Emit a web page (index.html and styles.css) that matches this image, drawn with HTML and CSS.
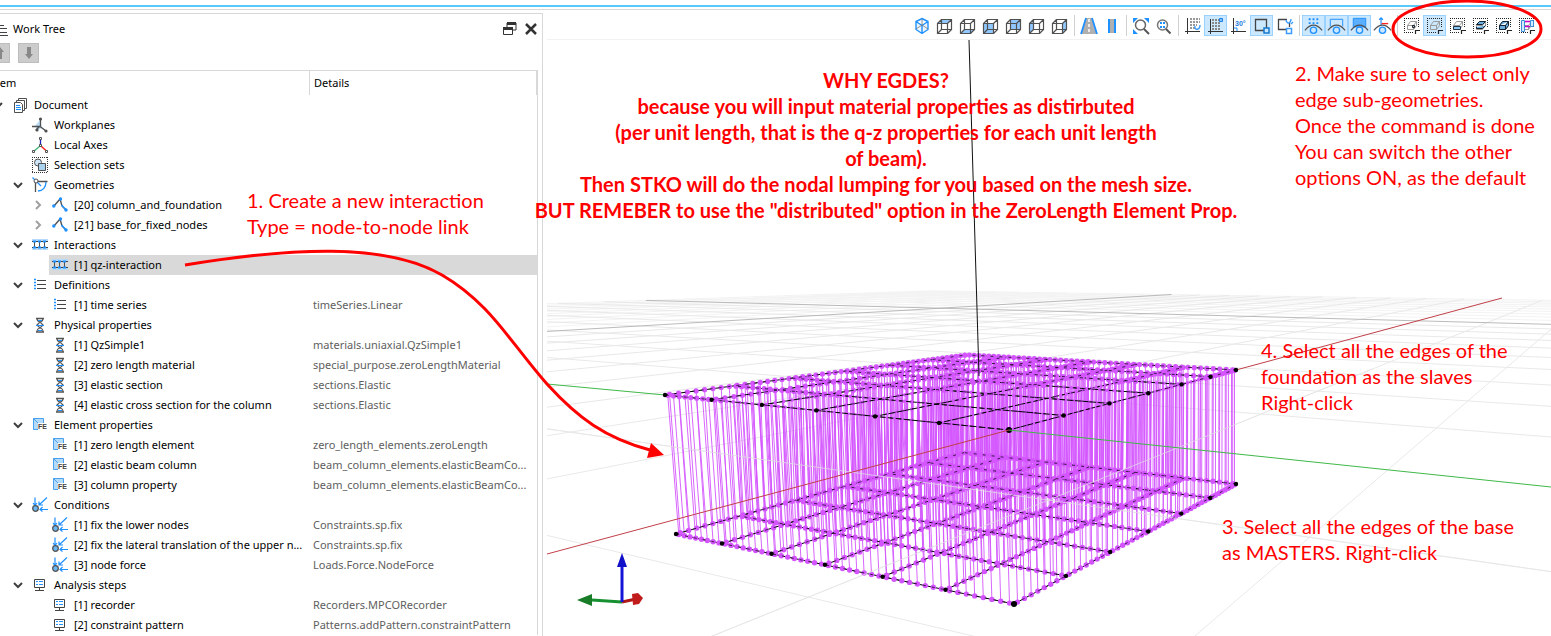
FILE: index.html
```html
<!DOCTYPE html>
<html lang="en">
<head>
<meta charset="utf-8">
<title>Work Tree</title>
<link rel="stylesheet" href="styles.css">
</head>
<body>
<svg class="defs" aria-hidden="true">
  <symbol id="doc" viewBox="0 0 16 16"><path d="M6.500 3.500v-2h8v10h-2M4.500 5.500v-2h8v10h-2" fill="none" stroke="#505050"/><path d="M2.500 5.500h6l2 2v8h-8z" fill="#fff" stroke="#505050"/><path d="M4 8.500h4M4 10.500h5M4 12.500h5" stroke="#1e90ff"/></symbol>
  <symbol id="planes" viewBox="0 0 16 16"><path d="M8 3L3 9l2 4 5-2z" fill="#b9dcf7"/><path d="M8.500 1v8M0 9.500h8l6 4.500M8 9l-4 4" fill="none" stroke="#505050" stroke-width="1.300"/><circle cx="8.500" cy="2" r="1.600" fill="#505050"/><circle cx="14" cy="14" r="1.600" fill="#505050"/><circle cx="5" cy="13" r="1.600" fill="#505050"/></symbol>
  <symbol id="axes" viewBox="0 0 16 16"><path d="M8.500 2v7" stroke="#2020c0" stroke-width="1.300"/><path d="M8 9l-6.500 5.500" stroke="#3cb371" stroke-width="1.300"/><path d="M9 9l5.500 5" stroke="#f22" stroke-width="1.500"/><path d="M7.500.5h2v2h-2zM7.500 7.500h2v2h-2zM.5 13.500h2v2h-2zM13.500 13.500h2v2h-2z" fill="#fff" stroke="#505050"/></symbol>
  <symbol id="sets" viewBox="0 0 16 16"><path d="M.5 0v16M15.500 0v16M0 .5h16M0 15.500h16" fill="none" stroke="#333" stroke-dasharray="1 1"/><circle cx="6" cy="5.500" r="3.500" fill="#cfe6f8" stroke="#505050"/><path d="M6.500 6.500h7v7h-7z" fill="#a9d2ee" stroke="#505050"/></symbol>
  <symbol id="geo" viewBox="0 0 16 16"><path d="M4 4.500h11.500M3.500 4v11" stroke="#505050" stroke-width="1.300"/><path d="M.5.5L9 9M14 5c0 5-3 9-8 9" fill="none" stroke="#1e90ff" stroke-width="1.300"/><circle cx="4" cy="4" r="2" fill="#fff" stroke="#505050"/></symbol>
  <symbol id="poly" viewBox="0 0 16 16"><path d="M2 9l6-7 2 7 4 4" fill="none" stroke="#555" stroke-width="1.400"/><circle cx="1.800" cy="9" r="1.700" fill="#1e90ff"/><circle cx="8.500" cy="2" r="1.700" fill="#1e90ff"/><path d="M9.500 8l4.500 5" stroke="#1e90ff" stroke-width="1.400"/><circle cx="14" cy="13" r="1.700" fill="#1e90ff"/></symbol>
  <symbol id="link" viewBox="0 0 16 16"><path d="M0 2h16v3H0zM0 10h16v3H0z" fill="#b4d9fa"/><path d="M0 4.500h16M0 10.500h16" stroke="#444"/><path d="M2.500 5v5M7.500 5v5M12.500 5v5" stroke="#505050"/><path d="M1 3.500h3v2H1zM6 3.500h3v2H6zM11 3.500h3v2h-3zM1 9.500h3v2H1zM6 9.500h3v2H6zM11 9.500h3v2h-3z" fill="#1e90ff"/></symbol>
  <symbol id="list" viewBox="0 0 16 16"><path d="M5 3.500h9M5 7.500h9M5 11.500h9" stroke="#444"/><path d="M2 2.500h2M2 5.500h2M2 8.500h2M2 11.500h2" stroke="#1e90ff" stroke-width="1.500"/></symbol>
  <symbol id="phys" viewBox="0 0 16 16"><path d="M4 1.500h8M4 15h8" stroke="#555" stroke-width="1.400"/><path d="M5 1.500q0 3 3 3.500 3 -.5 3-3.500M8 5L5 8l3 3 3-3zM5 15q0-3.500 3-4 3 .5 3 4" fill="none" stroke="#555" stroke-width="1.200"/><path d="M4 8.500h8M6 3.500h4M6 13.500h4" stroke="#1e90ff"/></symbol>
  <symbol id="fe" viewBox="0 0 16 16"><path d="M1.500 1.500h10v11h-10z" fill="#b4dcfa" stroke="#48a0ee"/><path d="M1.500 1.500l5 5" stroke="#48a0ee"/><path d="M6 6h10v8H6z" fill="#fff"/><text x="6" y="12" class="mini">FE</text></symbol>
  <symbol id="cond" viewBox="0 0 16 16"><path d="M3 .5v8M1 6l2 2.500L5 6M15 .5L7 8M7 4.500V8h4M16 12.500H8M10.500 10L8 12.500l2.500 2" fill="none" stroke="#1e90ff" stroke-width="1.200"/><circle cx="3.500" cy="11.500" r="2.800" fill="#69b7f5" stroke="#555" stroke-width="1.300"/></symbol>
  <symbol id="step" viewBox="0 0 16 16"><path d="M2.500 2.500h10v8h-10z" fill="#fff" stroke="#444"/><path d="M7.500 11v2M3 13.500h9" stroke="#444"/><path d="M4 4.500h2M7 4.500h4M4 7.500h2M7 7.500h4" stroke="#1e90ff"/></symbol>
  <symbol id="cube" viewBox="0 0 18 18"><path d="M1.500 6.500h10v10h-10zM5.500 2.500h10v10h-10zM1.500 6.500l4-4M11.500 6.500l4-4M1.500 16.500l4-4M11.500 16.500l4-4" fill="none" stroke="#505050" stroke-width="1.200"/></symbol>
  <symbol id="bend" viewBox="0 0 22 22"><path d="M2 16Q11 5 20 16" fill="none" stroke="#505050" stroke-width="1.300"/><circle cx="11" cy="16" r="3.300" fill="#cce8ff" stroke="#1e90ff" stroke-width="1.400"/></symbol>
  <symbol id="pick" viewBox="0 0 18 18"><path d="M1.500 1v15M15.500 1v10M1 1.500h15M1 15.500h10" fill="none" stroke="#222" stroke-dasharray="1 1"/><path d="M4.500 12.500v-4l3-4h6v4l-3 4zM4.500 8.500h6l3-4M10.500 8.500v4" fill="none" stroke="#999"/><path d="M12.500 17v-3.500H17" fill="none" stroke="#222" stroke-width="1.200"/></symbol>
  <symbol id="open" viewBox="0 0 10 10"><path d="M1 3l4 4 4-4" fill="none" stroke="#404040" stroke-width="2"/></symbol>
  <symbol id="shut" viewBox="0 0 10 10"><path d="M3 1l4 4-4 4" fill="none" stroke="#a0a0a0" stroke-width="2"/></symbol>
</svg>

<div class="strip"></div>
<main class="window">
  <aside class="dock">
    <header class="dock-title">
      <svg class="title-icon" viewBox="0 0 12 14"><path d="M2 2.500h6M4 5.500h7M4 9.500h7M4 12.500h8" stroke="#444"/></svg>
      <h1>Work Tree</h1>
      <button class="plain" aria-label="Float"><svg width="16" height="16"><path d="M5 2h9v7H5z" fill="none" stroke="#333"/><path d="M5 2.500h9" stroke="#333" stroke-width="3"/><path d="M1.500 7.500h9v6h-9z" fill="#fff" stroke="#333"/><path d="M1 7.500h10" stroke="#333" stroke-width="3"/></svg></button>
      <button class="plain" aria-label="Close"><svg width="16" height="16"><path d="M3 3l10 10M13 3L3 13" stroke="#333" stroke-width="2.500"/></svg></button>
    </header>
    <div class="moves">
      <button aria-label="Move up"><svg width="10" height="14"><path d="M5 1L1 6h2v7h4V6h2z" fill="#888"/></svg></button>
      <button aria-label="Move down"><svg width="10" height="14"><path d="M5 13L1 8h2V1h4v7h2z" fill="#888"/></svg></button>
    </div>
    <table class="tree">
      <thead><tr><th class="cut">Item</th><th>Details</th></tr></thead>
      <tbody>
        <tr><td><div class="node"><svg><use href="#open"/></svg><svg><use href="#doc"/></svg><span>Document</span></div></td><td></td></tr>
        <tr><td><div class="node l1"><i></i><svg><use href="#planes"/></svg><span>Workplanes</span></div></td><td></td></tr>
        <tr><td><div class="node l1"><i></i><svg><use href="#axes"/></svg><span>Local Axes</span></div></td><td></td></tr>
        <tr><td><div class="node l1"><i></i><svg><use href="#sets"/></svg><span>Selection sets</span></div></td><td></td></tr>
        <tr><td><div class="node l1"><svg><use href="#open"/></svg><svg><use href="#geo"/></svg><span>Geometries</span></div></td><td></td></tr>
        <tr><td><div class="node l2"><svg><use href="#shut"/></svg><svg><use href="#poly"/></svg><span>[20] column_and_foundation</span></div></td><td></td></tr>
        <tr><td><div class="node l2"><svg><use href="#shut"/></svg><svg><use href="#poly"/></svg><span>[21] base_for_fixed_nodes</span></div></td><td></td></tr>
        <tr><td><div class="node l1"><svg><use href="#open"/></svg><svg><use href="#link"/></svg><span>Interactions</span></div></td><td></td></tr>
        <tr class="selected"><td><div class="node l2"><i></i><svg><use href="#link"/></svg><span>[1] qz-interaction</span></div></td><td></td></tr>
        <tr><td><div class="node l1"><svg><use href="#open"/></svg><svg><use href="#list"/></svg><span>Definitions</span></div></td><td></td></tr>
        <tr><td><div class="node l2"><i></i><svg><use href="#list"/></svg><span>[1] time series</span></div></td><td>timeSeries.Linear</td></tr>
        <tr><td><div class="node l1"><svg><use href="#open"/></svg><svg><use href="#phys"/></svg><span>Physical properties</span></div></td><td></td></tr>
        <tr><td><div class="node l2"><i></i><svg><use href="#phys"/></svg><span>[1] QzSimple1</span></div></td><td>materials.uniaxial.QzSimple1</td></tr>
        <tr><td><div class="node l2"><i></i><svg><use href="#phys"/></svg><span>[2] zero length material</span></div></td><td>special_purpose.zeroLengthMaterial</td></tr>
        <tr><td><div class="node l2"><i></i><svg><use href="#phys"/></svg><span>[3] elastic section</span></div></td><td>sections.Elastic</td></tr>
        <tr><td><div class="node l2"><i></i><svg><use href="#phys"/></svg><span>[4] elastic cross section for the column</span></div></td><td>sections.Elastic</td></tr>
        <tr><td><div class="node l1"><svg><use href="#open"/></svg><svg><use href="#fe"/></svg><span>Element properties</span></div></td><td></td></tr>
        <tr><td><div class="node l2"><i></i><svg><use href="#fe"/></svg><span>[1] zero length element</span></div></td><td>zero_length_elements.zeroLength</td></tr>
        <tr><td><div class="node l2"><i></i><svg><use href="#fe"/></svg><span>[2] elastic beam column</span></div></td><td>beam_column_elements.elasticBeamCo...</td></tr>
        <tr><td><div class="node l2"><i></i><svg><use href="#fe"/></svg><span>[3] column property</span></div></td><td>beam_column_elements.elasticBeamCo...</td></tr>
        <tr><td><div class="node l1"><svg><use href="#open"/></svg><svg><use href="#cond"/></svg><span>Conditions</span></div></td><td></td></tr>
        <tr><td><div class="node l2"><i></i><svg><use href="#cond"/></svg><span>[1] fix the lower nodes</span></div></td><td>Constraints.sp.fix</td></tr>
        <tr><td><div class="node l2"><i></i><svg><use href="#cond"/></svg><span>[2] fix the lateral translation of the upper n...</span></div></td><td>Constraints.sp.fix</td></tr>
        <tr><td><div class="node l2"><i></i><svg><use href="#cond"/></svg><span>[3] node force</span></div></td><td>Loads.Force.NodeForce</td></tr>
        <tr><td><div class="node l1"><svg><use href="#open"/></svg><svg><use href="#step"/></svg><span>Analysis steps</span></div></td><td></td></tr>
        <tr><td><div class="node l2"><i></i><svg><use href="#step"/></svg><span>[1] recorder</span></div></td><td>Recorders.MPCORecorder</td></tr>
        <tr><td><div class="node l2"><i></i><svg><use href="#step"/></svg><span>[2] constraint pattern</span></div></td><td>Patterns.addPattern.constraintPattern</td></tr>
      </tbody>
    </table>
  </aside>

  <section class="view">
    <nav class="toolbar" aria-label="View tools">
      <button aria-label="Isometric"><svg viewBox="0 0 18 18"><path d="M9 1.500l6 3v8l-6 4-6-4v-8zM3 4.500l6 4 6-4M9 8.500v8" fill="#eaf5ff" stroke="#1e90ff" stroke-width="1.400"/><path d="M9 2v6l-6 4M9 8l6 4" fill="none" stroke="#777" stroke-width=".8"/></svg></button>
      <button aria-label="Top"><svg viewBox="0 0 18 18"><path d="M1.500 6.500l4-4h10l-4 4z" fill="#90c8ff"/><use href="#cube"/></svg></button>
      <button aria-label="Bottom"><svg viewBox="0 0 18 18"><path d="M1.500 16.500l4-4h10l-4 4z" fill="#90c8ff"/><use href="#cube"/></svg></button>
      <button aria-label="Front"><svg viewBox="0 0 18 18"><path d="M1.500 6.500h10v10h-10z" fill="#90c8ff"/><use href="#cube"/></svg></button>
      <button aria-label="Back"><svg viewBox="0 0 18 18"><path d="M5.500 2.500h10v10h-10z" fill="#90c8ff"/><use href="#cube"/></svg></button>
      <button aria-label="Left"><svg viewBox="0 0 18 18"><path d="M1.500 6.500l4-4v10l-4 4z" fill="#90c8ff"/><use href="#cube"/></svg></button>
      <button aria-label="Right"><svg viewBox="0 0 18 18"><path d="M11.500 6.500l4-4v10l-4 4z" fill="#90c8ff"/><use href="#cube"/></svg></button>
      <hr>
      <button aria-label="Perspective"><svg viewBox="0 0 18 18"><path d="M6 1h6l5 16H1z" fill="#b0b0b0"/><path d="M6 1L1 17M12 1l5 16" stroke="#1e90ff" stroke-width="1.800"/><path d="M9 2v14" stroke="#fff" stroke-width="1.500" stroke-dasharray="3 2"/></svg></button>
      <button aria-label="Orthographic"><svg viewBox="0 0 18 18"><path d="M5 2h8v14H5z" fill="#b0b0b0"/><path d="M6 2v14M12 2v14" stroke="#1e90ff" stroke-width="2"/></svg></button>
      <hr>
      <button aria-label="Zoom to fit"><svg viewBox="0 0 18 18"><path d="M1 1h5L1 6zM17 1v5l-5-5zM1 17v-5l5 5z" fill="#1e90ff"/><circle cx="8.500" cy="8" r="5" fill="#fff" stroke="#666" stroke-width="1.500"/><path d="M12 12l5 5" stroke="#555" stroke-width="2"/></svg></button>
      <button aria-label="Zoom to selection"><svg viewBox="0 0 18 18"><circle cx="7.500" cy="8" r="5" fill="#fff" stroke="#777" stroke-width="1.500"/><path d="M5 5h2v2H5zM8 5h2v2H8zM5 9h2v2H5zM8 9h2v2H8z" fill="#1e90ff"/><path d="M11 12l4.500 4.500" stroke="#555" stroke-width="2"/></svg></button>
      <hr>
      <button aria-label="Grid"><svg viewBox="0 0 18 18"><path d="M3.500 1v16M1 14.500h15" stroke="#333"/><path d="M6 2h10M6 5h10M6 8h7M6 11h6" stroke="#999" stroke-width="2" stroke-dasharray="2 1"/><path d="M11 9c-1 5 5 4 5-1" fill="none" stroke="#3a9dff" stroke-width="1.400"/></svg></button>
      <button class="on" aria-label="Snap to grid"><svg viewBox="0 0 18 18"><path d="M3.500 2v15M1 14.500h15" stroke="#333"/><path d="M5 3h9M5 6h9M5 9h9M5 12h9" stroke="#888" stroke-width="2" stroke-dasharray="2 1"/><path d="M12.500 1.500h3v3h-3z" fill="#7cc0ff" stroke="#1e80e0"/></svg></button>
      <button aria-label="Snap angle"><svg viewBox="0 0 18 18"><path d="M3.500 1v16M1 14.500h15" stroke="#333"/><path d="M4 11h3v3" fill="none" stroke="#1e90ff"/><text x="5" y="9" class="angle">30°</text></svg></button>
      <button class="on" aria-label="Box select"><svg viewBox="0 0 18 18"><path d="M2.500 2.500h11v11h-11z" fill="none" stroke="#444" stroke-width="1.300"/><path d="M11 11h5v5h-5z" fill="#cce8ff" stroke="#1478d0" stroke-width="1.500"/></svg></button>
      <button aria-label="Lasso select"><svg viewBox="0 0 18 18"><path d="M11 2.500H2.500v10H10M13.500 6v4" fill="none" stroke="#444" stroke-width="1.300"/><path d="M10.500 11.500h5v5h-5z" fill="#fff" stroke="#3a9dff" stroke-width="1.500"/><path d="M10 3c1 5 5 3 5-1M15 7l2-2" fill="none" stroke="#3a9dff" stroke-width="1.300"/></svg></button>
      <hr>
      <button class="on" aria-label="Show vertices"><svg viewBox="0 0 22 22"><path d="M6 4.500h10M6 8.500h10" stroke="#1e90ff" stroke-width="2" stroke-dasharray="2 2"/><use href="#bend"/></svg></button>
      <button class="on" aria-label="Show edges"><svg viewBox="0 0 22 22"><path d="M4.500 12V4.500h13V12" fill="none" stroke="#1e90ff"/><use href="#bend"/></svg></button>
      <button class="on" aria-label="Show faces"><svg viewBox="0 0 22 22"><path d="M4.500 12.500v-9h13v9z" fill="#5cafff" stroke="#1e90ff"/><use href="#bend"/></svg></button>
      <button aria-label="Show axes"><svg viewBox="0 0 22 22"><path d="M9.500 3v8M7.500 5l2-2 2 2" fill="none" stroke="#1e90ff" stroke-width="1.200"/><path d="M10 9h7" stroke="#f22" stroke-width="1.400"/><use href="#bend"/></svg></button>
      <hr>
      <button aria-label="Pick vertices"><svg viewBox="0 0 18 18"><use href="#pick"/><path d="M9.500 8.500h2v2h-2z" fill="#9cf" stroke="#222"/></svg></button>
      <button class="on" aria-label="Pick edges"><svg viewBox="0 0 18 18"><use href="#pick"/></svg></button>
      <button aria-label="Pick wires"><svg viewBox="0 0 18 18"><use href="#pick"/><path d="M4.500 9.500h7v3h-7z" fill="#8cc8f5" stroke="#234"/></svg></button>
      <button aria-label="Pick faces"><svg viewBox="0 0 18 18"><use href="#pick"/><path d="M4.500 7.500l3-3h6l-3 3zM4.500 10v1.500h6l3-3" fill="#6db0e0" stroke="#123"/></svg></button>
      <button aria-label="Pick solids"><svg viewBox="0 0 18 18"><use href="#pick"/><path d="M4.500 12.500v-4l3-4h6v4l-3 4zM4.500 8.500h6l3-4M10.500 8.500v4" fill="#6db0e0" stroke="#123"/></svg></button>
      <button aria-label="Pick interactions"><svg viewBox="0 0 18 18"><use href="#pick"/><path d="M3.500 3.500h3v11h-3zM12.500 3.500h3v6h-3z" fill="#d5ebff" stroke="#3a8fd8"/><path d="M7 4.500h5M7 9.500h5" stroke="#c0c" stroke-width="1.500"/></svg></button>
    </nav>
    <svg class="scene" id="scene" role="img" aria-label="Foundation and base edges linked node to node"></svg>
  </section>

  <svg class="marks" aria-hidden="true">
    <path d="M185 265C290 248 385 242 442 275C490 303 510 342 547 384C578 418 605 438 650 450"/>
    <path class="tip" d="M664 455l-17 3 4-15z"/>
    <ellipse cx="1467" cy="29" rx="74" ry="28"/>
  </svg>
  <p class="note create">1. Create a new interaction<br>Type = node-to-node link</p>
  <p class="note only">2. Make sure to select only<br>edge sub-geometries.<br>Once the command is done<br>You can switch the other<br>options ON, as the default</p>
  <p class="note base">3. Select all the edges of the base<br>as MASTERS. Right-click</p>
  <p class="note slaves">4. Select all the edges of the<br>foundation as the slaves<br>Right-click</p>
  <p class="note why">WHY EGDES?<br>because you will input material properties as distirbuted<br>(per unit length, that is the q-z properties for each unit length<br>of beam).<br>Then STKO will do the nodal lumping for you based on the mesh size.<br>BUT REMEBER to use the "distributed" option in the ZeroLength Element Prop.</p>
</main>
<script src="scene.js"></script>
</body>
</html>
```
FILE: styles.css
```css
* { box-sizing: border-box; }
body {
  margin: 0;
  height: 100vh;
  overflow: hidden;
  position: relative;
  display: flex;
  flex-direction: column;
  background: #fff;
  color: #000;
  font: 11px/20px "Noto Sans", "Open Sans", sans-serif;
}
.defs { position: absolute; width: 0; height: 0; }
.strip {
  flex: none;
  height: 10px;
  border-top: 5px solid #fff;
  border-bottom: 1px solid #d8d8d8;
  background: linear-gradient(#5bc8fa 2px, #fff 2px);
}
.window { flex: 1; display: flex; min-height: 0; }
.dock {
  width: 35%;
  flex: none;
  margin-top: 3px;
  border: solid #d8d8d8;
  border-width: 1px 1px 0 0;
  overflow: hidden;
}
.dock-title { display: flex; align-items: center; height: 29px; }
.title-icon { width: 12px; height: 14px; margin: 2px 5px 0 -4px; }
h1 { flex: 1; margin: 0; font-size: 11px; font-weight: 400; }
button { display: flex; align-items: center; justify-content: center; padding: 0; margin: 0; }
.plain { width: 21px; height: 20px; border: 0; background: none; }
.moves { display: flex; gap: 8px; margin-left: -11px; height: 27px; }
.moves button { width: 21px; height: 20px; border: 1px solid #bdbdbd; background: #ccc; }
.tree {
  width: calc(100% - 4px);
  table-layout: fixed;
  border-collapse: separate;
  border-spacing: 0;
  border: solid #d8d8d8;
  border-width: 1px 1px 0 0;
}
th { height: 24px; padding: 0 4px; text-align: left; font-weight: 400; border-right: 1px solid #d8d8d8; }
th:first-child { width: 310px; }
.cut { text-indent: -12px; }
td { height: 20px; padding: 0 0 0 3px; color: #606060; white-space: nowrap; }
td:first-child { padding: 0; color: #000; }
.node { display: flex; align-items: center; height: 20px; margin-left: -12px; }
.node.l1 { margin-left: 8px; }
.node.l2 { margin-left: 28px; }
.node > :first-child { width: 10px; height: 10px; margin: 0 5px; flex: none; }
.node > :nth-child(2) { width: 16px; height: 16px; margin: 0 6px 0 4px; flex: none; }
.selected td { background: #d9d9d9; }
.selected td:first-child { background: linear-gradient(90deg, #fff 49px, #d9d9d9 49px); }
.mini { font: bold 7px "Liberation Sans", sans-serif; fill: #444; }
.angle { font: bold 7px "Liberation Sans", sans-serif; fill: #1e80e0; }

.view { flex: 1; min-width: 0; padding-left: 4px; display: flex; flex-direction: column; }
.toolbar {
  flex: none;
  height: 30px;
  padding: 5px 13px 3px 0;
  display: flex;
  justify-content: flex-end;
  border-bottom: 1px solid #f2f2f2;
}
.toolbar button { width: 23px; height: 21px; border: 1px solid transparent; background: none; }
.toolbar .on { background: #cce8ff; border-color: #99d1ff; }
.toolbar svg { width: 18px; height: 18px; margin: 1px 0 0 1px; flex: none; }
.toolbar svg[viewBox="0 0 22 22"] { width: 21px; height: 21px; margin: 0; }
.toolbar hr { width: 1px; height: 21px; margin: 0 2px 0 3px; border: 0; background: #d0d0d0; }
.scene { flex: 1; width: 100%; min-height: 0; display: block; }
.grid { stroke: #e9e9e9; fill: none; }
.grid-far { stroke: #f3f3f3; fill: none; }
.grid-major { stroke: #aaa; fill: none; }
.axis-x { stroke: #c04048; }
.axis-y { stroke: #40b848; }
.axis-z { stroke: #111; }
.tie { stroke: #d455ff; stroke-opacity: .9; fill: none; }
.edge { stroke: #000; fill: none; }
.dot { fill: #d455ff; }
.over { stroke: #e6e6e6; stroke-opacity: .7; }

.marks { position: absolute; inset: 0; width: 100%; height: 100%; pointer-events: none; fill: none; stroke: #f00; stroke-width: 3; }
.marks .tip { fill: #f00; stroke: none; }
.note { position: absolute; margin: 0; color: #f00; font: 20px/26px Lato, "Open Sans", sans-serif; white-space: nowrap; }
.create { left: 247px; top: 187px; }
.only { left: 1295px; top: 60px; }
.base { left: 1222px; top: 513px; }
.slaves { left: 1261px; top: 337px; }
.why { left: 886px; top: 67px; transform: translateX(-50%); text-align: center; font-weight: 700; }
```
FILE: scene.js
```js
const scene = document.getElementById('scene');
const OX = 547, OY = 40;

// Projective map of the unit square: near, left, far, right corners.
function plane(n, l, f, r) {
  const sx = n[0] - l[0] + f[0] - r[0], sy = n[1] - l[1] + f[1] - r[1];
  const ax = l[0] - f[0], ay = l[1] - f[1], bx = r[0] - f[0], by = r[1] - f[1];
  const d = ax * by - bx * ay;
  const g = (sx * by - bx * sy) / d, h = (ax * sy - sx * ay) / d;
  const a = l[0] - n[0] + g * l[0], b = r[0] - n[0] + h * r[0];
  const c = l[1] - n[1] + g * l[1], e = r[1] - n[1] + h * r[1];
  const p = (u, v) => {
    const w = g * u + h * v + 1;
    return [(a * u + b * v + n[0]) / w - OX, (c * u + e * v + n[1]) / w - OY];
  };
  p.depth = (u, v) => g * u + h * v + 1;
  return p;
}

const top_ = plane([1009, 430], [665, 395], [967, 354.9], [1236, 370]);
const base = plane([1014, 604], [676, 534], [964, 452.6], [1236, 484]);
const fmt = p => p[0].toFixed(1) + ' ' + p[1].toFixed(1);
const path = (cls, d, extra = '') => `<path class="${cls}" d="${d}" ${extra}/>`;

// A ground line cut where it would pass behind the viewer.
function ground(u0, v0, u1, v1) {
  const d0 = top_.depth(u0, v0), d1 = top_.depth(u1, v1), near = 0.15;
  let s = 0, t = 1;
  if (d0 < near) s = (near - d0) / (d1 - d0);
  if (d1 < near) t = (near - d0) / (d1 - d0);
  if (d0 < near && d1 < near) return '';
  const at = k => fmt(top_(u0 + (u1 - u0) * k, v0 + (v1 - v0) * k));
  return `M${at(s)}L${at(t)}`;
}

const N = 20, STEP = 0.35, R = N * STEP;
let minor = '', far = '', major = '';
for (let i = -N; i <= N; i++) {
  if (i === 0) continue;
  const k = i * STEP, lines = ground(k, -R, k, R) + ground(-R, k, R, k);
  if (Math.abs(i) === 10) major += lines;
  else if (i > 9) far += lines;
  else minor += lines;
}

let ties = '', edges = '', dots = '';
const dot = (p, r, cls) => `<circle class="${cls}" cx="${p[0].toFixed(1)}" cy="${p[1].toFixed(1)}" r="${r}"/>`;
for (let i = 0; i <= 6; i++) {
  for (const flip of [false, true]) {
    const uv = t => flip ? [t, i / 6] : [i / 6, t];
    for (const p of [top_, base]) edges += `M${fmt(p(...uv(0)))}L${fmt(p(...uv(1)))}`;
    for (let k = 0; k < 48; k++) {
      const c = uv((k + 0.5) / 48), a = top_(...c), b = base(...c);
      ties += `M${fmt(a)}L${fmt(b)}`;
      const reach = c[0] + c[1];
      dots += dot(a, reach < 0.55 ? 1.2 : reach < 0.8 ? 1.8 : 2.6, 'dot') + dot(b, 2.7, 'dot');
    }
  }
}
let corners = '';
for (let i = 0; i <= 6; i++) {
  for (const p of [top_, base]) {
    corners += dot(p(i / 6, 0), i ? 2.2 : 3, 'node-dot') + dot(p(0, i / 6), 2.2, 'node-dot');
  }
}

const line = (x1, y1, x2, y2) => `M${x1 - OX} ${y1 - OY}L${x2 - OX} ${y2 - OY}`;
scene.innerHTML =
  path('grid-far', far) +
  path('grid', minor) +
  path('grid-major', major, 'stroke-width=".8"') +
  path('axis-y', line(547, 384, 665, 395)) +
  path('axis-x', line(1236, 370, 1502, 298)) +
  path('tie', ties) +
  path('edge', edges, 'stroke-width="1"') + dots +
  path('edge', edges, 'stroke-width="1" stroke-opacity=".7" stroke-dasharray="3 6"') + corners +
  path('over', ground(-STEP, -1.2, -STEP, 1.2) + ground(-1.2, -STEP, 1.2, -STEP)) +
  path('axis-x', line(547, 554, 1009, 430)) +
  path('axis-y', line(1009, 430, 1551, 487)) +
  path('axis-z', line(969, 40, 979, 376)) +
  `<g transform="translate(${-OX} ${-OY})">
    <path d="M622 602L592 600" stroke="#169030" stroke-width="3"/>
    <path d="M577 600l15-6v12z" fill="#187c28"/>
    <path d="M622 602l14-3" stroke="#b01818" stroke-width="3"/>
    <path d="M632 594l6-1 5 5-4 6-6 1z" fill="#c01c1c"/>
    <path d="M622 602v-36" stroke="#1414d8" stroke-width="3"/>
    <path d="M622 553l-5 14h10z" fill="#1010c8"/>
  </g>`;
```
